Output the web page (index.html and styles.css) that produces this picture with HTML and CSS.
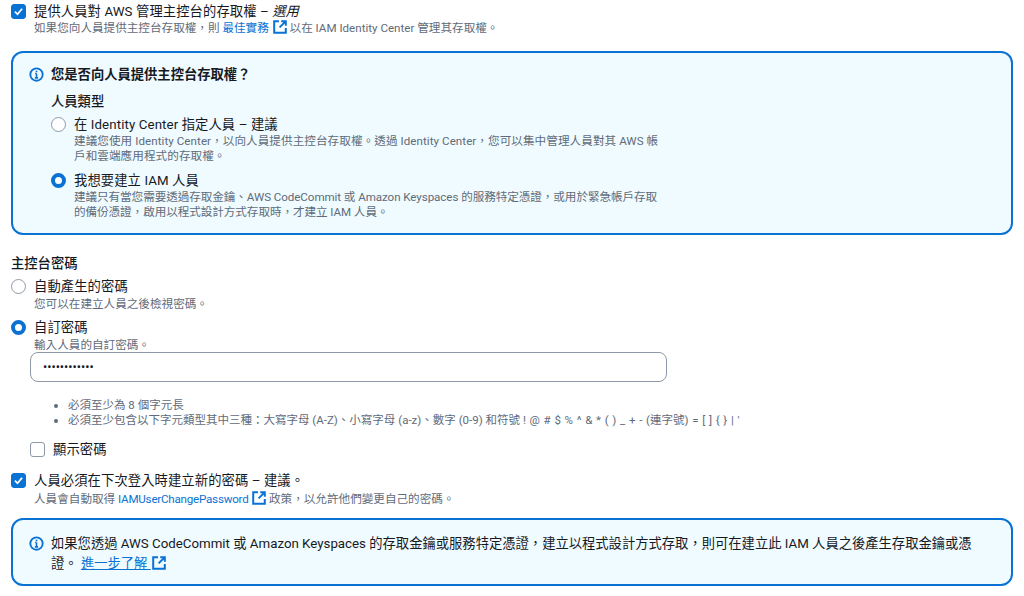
FILE: index.html
```html
<!DOCTYPE html>
<html lang="zh-Hant">
<head>
<meta charset="utf-8">
<title>IAM 人員</title>
<link rel="stylesheet" href="styles.css">
</head>
<body>
<svg class="defs" width="0" height="0" aria-hidden="true">
  <symbol id="ext" viewBox="0 0 14 14">
    <path d="M6 1.2H1.2v11.6h11.6V8" fill="none" stroke="currentColor" stroke-width="2"/>
    <path d="M8.2 1.2h4.6v4.6M12.6 1.4 6.6 7.4" fill="none" stroke="currentColor" stroke-width="2"/>
  </symbol>
  <symbol id="info" viewBox="0 0 16 16">
    <circle cx="8" cy="8" r="6.6" fill="none" stroke="currentColor" stroke-width="2"/>
    <path d="M8 7v4.6M6.3 11.6h3.4M6.6 7H8" fill="none" stroke="currentColor" stroke-width="1.7"/>
    <path d="M8 3.9v1.7" fill="none" stroke="currentColor" stroke-width="1.8"/>
  </symbol>
  <symbol id="tick" viewBox="0 0 16 16">
    <path d="M3.6 8.2 6.8 11.4 12.4 4.6" fill="none" stroke="#fff" stroke-width="2.2"/>
  </symbol>
</svg>
<main class="page">
  <div class="opt first">
    <span class="check on"><svg class="tick"><use href="#tick"/></svg></span>
    <div class="opt-body">
      <div class="label">提供人員對 AWS 管理主控台的存取權 – <em>選用</em></div>
      <div class="desc">如果您向人員提供主控台存取權，則 <a class="link" href="#">最佳實務 <svg class="ext"><use href="#ext"/></svg></a> 以在 IAM Identity Center 管理其存取權。</div>
    </div>
  </div>

  <section class="alert alert-top">
    <svg class="info"><use href="#info"/></svg>
    <div class="alert-body">
      <div class="alert-title">您是否向人員提供主控台存取權？</div>
      <div class="group-title">人員類型</div>
      <div class="opt radio-row">
        <span class="radio"></span>
        <div class="opt-body narrow">
          <div class="label">在 Identity Center 指定人員 – 建議</div>
          <div class="desc loose">建議您使用 Identity Center，以向人員提供主控台存取權。透過 Identity Center，您可以集中管理人員對其 AWS 帳戶和雲端應用程式的存取權。</div>
        </div>
      </div>
      <div class="opt radio-row second">
        <span class="radio on"></span>
        <div class="opt-body narrow">
          <div class="label">我想要建立 IAM 人員</div>
          <div class="desc tight">建議只有當您需要透過存取金鑰、AWS CodeCommit 或 Amazon Keyspaces 的服務特定憑證，或用於緊急帳戶存取的備份憑證，啟用以程式設計方式存取時，才建立 IAM 人員。</div>
        </div>
      </div>
    </div>
  </section>

  <div class="group-title pw-title">主控台密碼</div>
  <div class="opt radio-row pw-auto">
    <span class="radio"></span>
    <div class="opt-body">
      <div class="label">自動產生的密碼</div>
      <div class="desc">您可以在建立人員之後檢視密碼。</div>
    </div>
  </div>
  <div class="opt radio-row pw-custom">
    <span class="radio on"></span>
    <div class="opt-body">
      <div class="label">自訂密碼</div>
      <div class="desc">輸入人員的自訂密碼。</div>
    </div>
  </div>
  <div class="nested">
    <div class="input">••••••••••••</div>
    <ul class="rules">
      <li>必須至少為 8 個字元長</li>
      <li>必須至少包含以下字元類型其中三種：大寫字母 (A-Z)、小寫字母 (a-z)、數字 (0-9) 和符號 <span class="symbols">! @ # $ % ^ &amp; * ( ) _ + - (連字號) = [ ] { } | '</span></li>
    </ul>
    <div class="opt show">
      <span class="check"></span>
      <div class="opt-body"><div class="label">顯示密碼</div></div>
    </div>
  </div>
  <div class="opt must">
    <span class="check on"><svg class="tick"><use href="#tick"/></svg></span>
    <div class="opt-body">
      <div class="label">人員必須在下次登入時建立新的密碼 – 建議。</div>
      <div class="desc">人員會自動取得 <a class="link policy" href="#">IAMUserChangePassword <svg class="ext"><use href="#ext"/></svg></a> 政策，以允許他們變更自己的密碼。</div>
    </div>
  </div>

  <section class="alert alert-bottom">
    <svg class="info"><use href="#info"/></svg>
    <div class="alert-body">
      <div class="alert-text">如果您透過 AWS CodeCommit 或 Amazon Keyspaces 的存取金鑰或服務特定憑證，建立以程式設計方式存取，則可在建立此 IAM 人員之後產生存取金鑰或憑證。 <a class="link under" href="#">進一步了解&nbsp;</a><svg class="ext link-icon"><use href="#ext"/></svg></div>
    </div>
  </section>
</main>
</body>
</html>
```

FILE: styles.css
```css
* { box-sizing: border-box; }
html, body { margin: 0; padding: 0; background: #fff; }
body {
  width: 1024px;
  height: 596px;
  overflow: hidden;
  color: #16191f;
  font-family: Roboto, "Noto Sans CJK TC", sans-serif;
  font-size: 13.3px;
}
.defs { position: absolute; }
.page { padding: 0 11px; }
.opt { display: flex; gap: 8px; }
.opt-body { flex: 1; min-width: 0; }
.narrow { max-width: 590px; }
.label { font-size: 13.3px; line-height: 20px; letter-spacing: 0.1px; }
.label em { font-style: italic; }
.desc { font-size: 11.6px; line-height: 15px; color: #5f6b7a; }
.alert-body .desc { margin-top: -1px; }
.first .desc { margin-top: -2px; }
.loose { letter-spacing: 0.06px; }
.tight { letter-spacing: -0.07px; }
.link { color: #0972d3; text-decoration: none; }
.policy { letter-spacing: -0.22px; }
.under { text-decoration: underline; }
.ext { width: 14px; height: 14px; vertical-align: -2px; margin-left: 1px; color: #0972d3; }
.check {
  flex: none;
  width: 15px;
  height: 15px;
  margin-top: 2px;
  border: 1px solid #8d99a8;
  border-radius: 3px;
  background: #fff;
  display: block;
}
.check.on { background: #0972d3; border-color: #0972d3; }
.tick { display: block; width: 13px; height: 13px; }
.radio {
  flex: none;
  width: 15px;
  height: 15px;
  margin-top: 2px;
  border: 1px solid #8d99a8;
  border-radius: 50%;
  background: #fff;
  display: block;
}
.radio.on { border: 4.5px solid #0972d3; }
.first { padding-top: 2px; }
.alert {
  display: flex;
  gap: 7px;
  border: 2px solid #0972d3;
  border-radius: 12px;
  background: #f0fbff;
  padding: 12px 16px;
}
.alert-top { height: 184px; margin-top: 15px; }
.alert-bottom { height: 68px; margin-top: 11px; padding-top: 14px; }
.info { flex: none; width: 15px; height: 15px; margin-top: 2px; color: #0972d3; }
.alert-body { flex: 1; min-width: 0; }
.alert-title { font-size: 13.3px; line-height: 20px; font-weight: 600; }
.group-title { font-size: 13.3px; line-height: 20px; font-weight: 500; }
.alert-body .group-title { margin-top: 7px; }
.radio-row { gap: 8px; }
.alert-body .radio-row { margin-top: 3px; }
.alert-body .radio-row.second { margin-top: 7px; }
.alert-text { font-size: 13.3px; line-height: 20px; max-width: 950px; }
.pw-title { margin-top: 19px; }
.pw-auto { margin-top: 3px; }
.pw-custom { margin-top: 6px; }
.pw-custom .desc { line-height: 14px; }
.nested { padding-left: 19px; }
.input {
  width: 637px;
  height: 30px;
  border: 1px solid #8d99a8;
  border-radius: 8px;
  padding: 0 12px;
  font-size: 12.5px;
  line-height: 28px;
  color: #16191f;
  background: #fff;
}
.rules {
  margin: 16px 0 0;
  padding: 0 0 0 38px;
  font-size: 11.5px;
  line-height: 15px;
  color: #5f6b7a;
}
.symbols { word-spacing: 0.85px; }
.show { margin-top: 12px; }
.must { margin-top: 11px; }
.link-icon { vertical-align: -2px; }
```
